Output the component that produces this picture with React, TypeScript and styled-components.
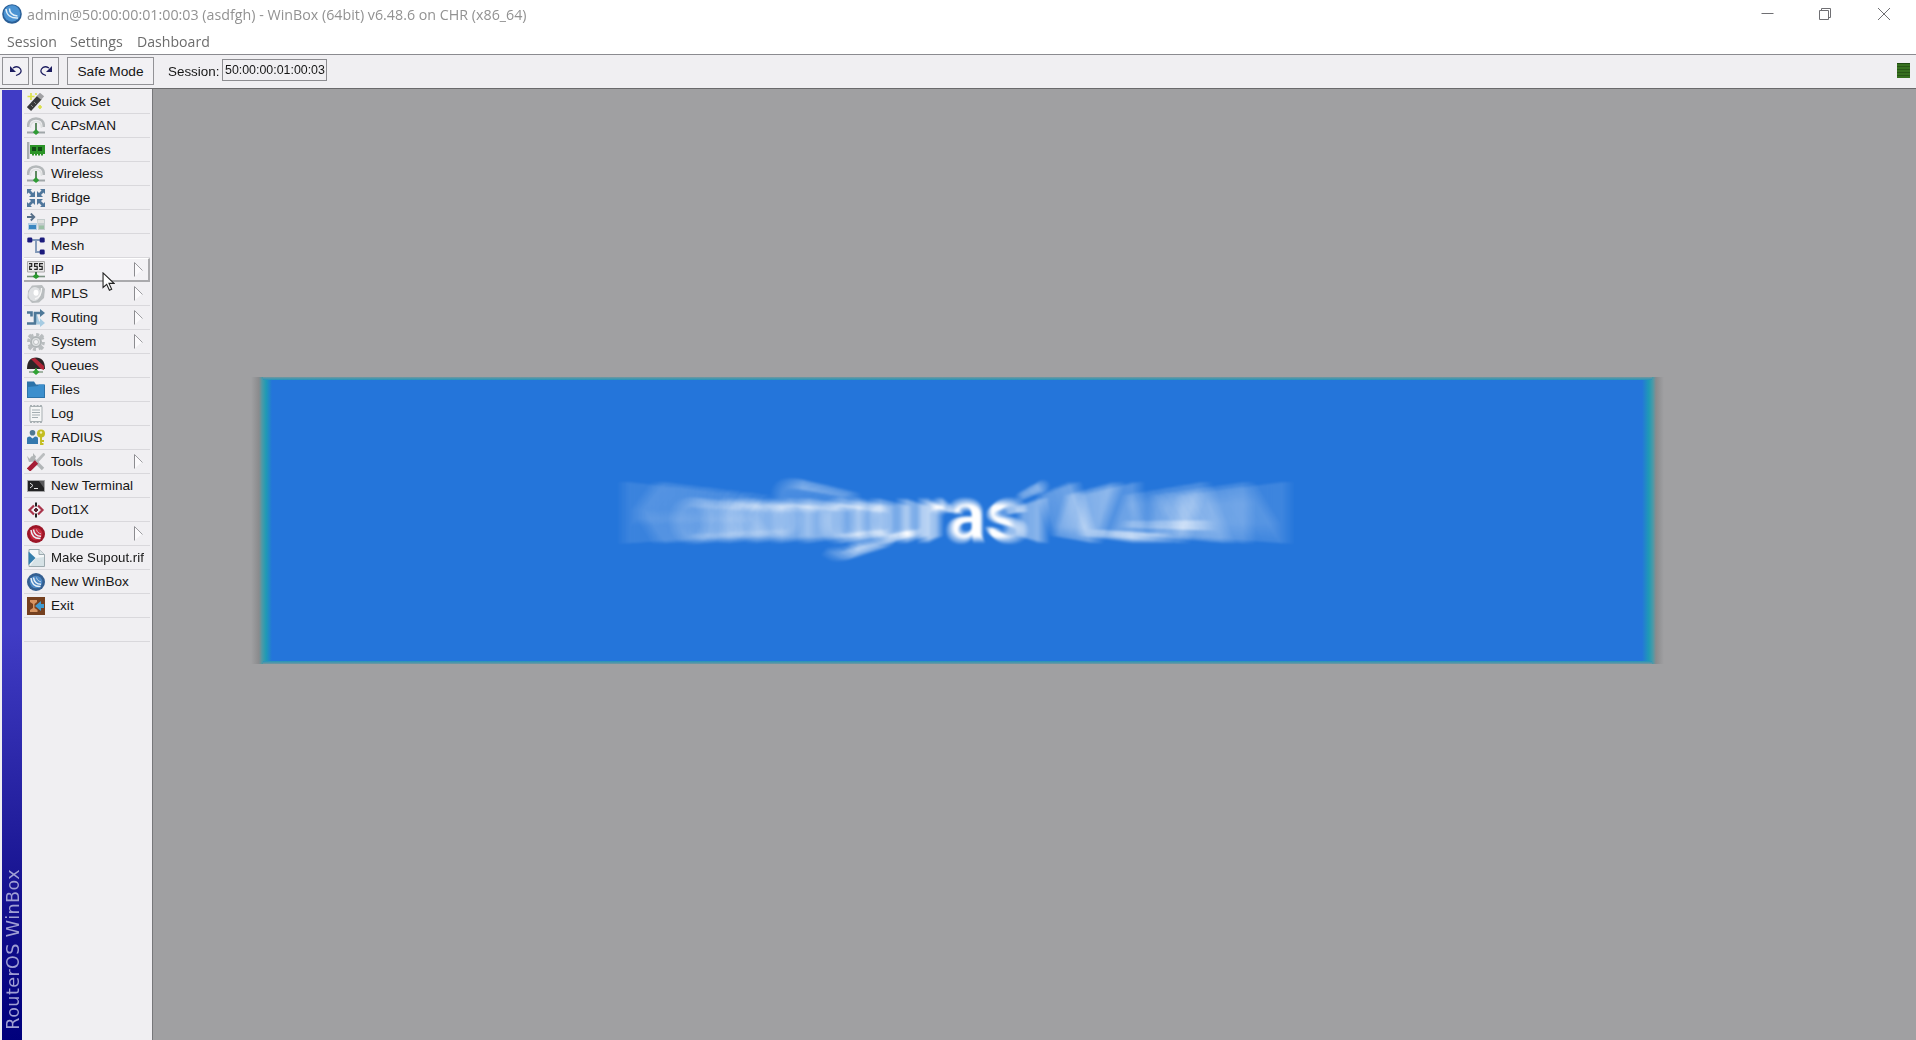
import React from "react";
import styled, { createGlobalStyle, css } from "styled-components";

const Global = createGlobalStyle`
  * { box-sizing: border-box; }
  body { margin: 0; overflow: hidden; background: #f0eff2; }
`;

const Window = styled.div`
  display: flex;
  flex-direction: column;
  position: relative;
  width: 1916px;
  height: 1040px;
  background: #f0eff2;
  color: #161616;
  font-family: "Liberation Sans", Arial, sans-serif;
`;

const TitleBar = styled.header`
  display: flex;
  align-items: center;
  height: 28px;
  padding-left: 2px;
  background: #fff;
`;

const Logo = styled.svg`
  width: 20px;
  height: 20px;
  margin-right: 5px;
  flex: none;
`;

const Title = styled.h1`
  flex: 1;
  margin: 0;
  color: #929292;
  font: 400 15px/28px "Open Sans", "Noto Sans", sans-serif;
  white-space: nowrap;
`;

const Fit = styled.span<{ $x: number }>`
  display: inline-block;
  transform: scaleX(${(p) => p.$x});
  transform-origin: left center;
`;

const Controls = styled.div`
  display: flex;
  gap: 46px;
  padding-right: 26px;
  svg { display: block; width: 12px; height: 12px; fill: none; stroke: #6f6f73; overflow: visible; }
`;

const MenuBar = styled.nav`
  display: flex;
  height: 26px;
  padding-left: 7px;
  background: #fff;
`;

const MenuItem = styled.span<{ $w: number }>`
  width: ${(p) => p.$w}px;
  color: #6c6c6c;
  font: 400 15px/27px "Open Sans", "Noto Sans", sans-serif;
  white-space: nowrap;
`;

const Toolbar = styled.div`
  display: flex;
  align-items: flex-start;
  height: 35px;
  padding: 2px 6px 0 2px;
  border-top: 1px solid #8b8b90;
  border-bottom: 1px solid #6a6a6c;
  font-size: 13.7px;
`;

const Button = styled.button<{ $w: number; $ml?: number }>`
  display: flex;
  align-items: center;
  justify-content: center;
  width: ${(p) => p.$w}px;
  height: 28px;
  margin: 0 0 0 ${(p) => p.$ml ?? 0}px;
  padding: 0;
  border: 1px solid #929296;
  background: #f2f1f4;
  color: #161616;
  font: inherit;
  white-space: nowrap;
`;

const SessionLabel = styled.label`
  margin-left: 14px;
  line-height: 29px;
  width: 54px;
  white-space: nowrap;
`;

const SessionField = styled.output`
  width: 105px;
  height: 22px;
  margin-top: 2px;
  padding-left: 2px;
  border: 1px solid #8c8c90;
  line-height: 20px;
  white-space: nowrap;
`;

const Led = styled.i`
  width: 13px;
  height: 15px;
  margin: 6px 0 0 auto;
  border-top: 1px solid #1f4a12;
  background: repeating-linear-gradient(#37701f 0 2px, #285616 2px 3px);
`;

const Body = styled.div`
  display: flex;
  flex: 1;
  min-height: 0;
`;

const Brand = styled.aside`
  display: flex;
  align-items: center;
  flex: none;
  width: 20px;
  margin: 1px 0 0 2px;
  background: linear-gradient(#403cc5 0, #403cc5 57%, #24209f 76%, #120e8c 87%, #00007c 100%);
  color: #a09fd4;
  font: 400 17.6px/18px "DejaVu Sans", Verdana, sans-serif;
  writing-mode: vertical-rl;
`;

const BrandText = styled.span`
  margin-top: auto;
  margin-bottom: 10px;
  margin-left: 2px;
  transform: rotate(180deg);
  letter-spacing: 0.4px;
  white-space: nowrap;
`;

const Sidebar = styled.nav`
  display: flex;
  flex-direction: column;
  width: 130px;
  padding: 1px 1px 0 2px;
`;

const Row = styled.div<{ $active?: boolean }>`
  display: flex;
  align-items: center;
  height: 24px;
  width: 126px;
  padding-left: 3px;
  border-bottom: 1px solid #d9d8dc;
  font-size: 13.6px;
  white-space: nowrap;
  > svg:first-child { width: 18px; height: 18px; margin-right: 6px; flex: none; }
  ${(p) =>
    p.$active &&
    css`
      border: 1px solid #aaaaad;
      border-width: 0 2px 2px 0;
      border-top: 1px solid #fff;
      background: #f3f2f5;
    `}
`;

const Arrow = styled.svg<{ $active?: boolean }>`
  width: 9px;
  height: 15px;
  margin-left: auto;
  margin-right: ${(p) => (p.$active ? 5 : 7)}px;
  fill: #fbfafc;
`;

const Workspace = styled.main`
  flex: 1;
  position: relative;
  border-left: 1px solid #77777a;
  background: #a0a0a2;
`;

const Banner = styled.section`
  position: absolute;
  left: 98px;
  top: 288px;
  width: 1413px;
  height: 287px;
  background: linear-gradient(90deg, rgba(125, 125, 125, 0) 0, #8a8b8d 8px, #4f99a6 11px, #1f9bb4 15px, #2475da 21px, #2475da 1391px, #1f9bb4 1398px, #4f99a6 1402px, #8a8b8d 1405px, rgba(125, 125, 125, 0) 1413px);
  &::before, &::after {
    content: "";
    position: absolute;
    left: 12px;
    right: 12px;
    height: 3px;
    background: linear-gradient(#74989f, #2294ba);
  }
  &::before { top: 0; }
  &::after { bottom: 0; transform: scaleY(-1); }
`;

const Headline = styled.svg`
  position: absolute;
  left: 349px;
  top: 72px;
  width: 720px;
  height: 140px;
  isolation: isolate;
  text { font-family: Roboto, sans-serif; font-weight: 700; fill: #fff; }
  use { mix-blend-mode: plus-lighter; }
`;

const Cursor = styled.svg`
  position: absolute;
  left: 102px;
  top: 272px;
  width: 13px;
  height: 20px;
`;

const Globe = ({ a, b }: { a: string; b: string }) => (
  <>
    <circle cx="9" cy="9" r="9" fill={a} />
    <circle cx="9" cy="9" r="6.300" fill={b} />
    <path d="M4 5C4.500 10.500 8 13.800 13.500 13.500M6.500 4.500C7 8.500 9.500 11.200 14 11.200" fill="none" stroke="#eaf1f8" strokeWidth="1.500" />
    <path d="M9.500 4.500C10 7 11.500 8.300 14 8.800" fill="none" stroke="#eaf1f8" strokeWidth=".7" />
  </>
);

const Antenna = () => (
  <>
    <path d="M1.200 10C.8 4.500 4 1.500 9 1.500s8.200 3 7.800 8.500" fill="none" stroke="#b4b8ba" strokeWidth="2.600" />
    <path d="M3.500 11C3 7 5.500 4.500 9 4.500s5.500 2.500 5.500 6.500" fill="none" stroke="#dfe1e1" strokeWidth="1.500" />
    <path d="M9 6v8" stroke="#4d7d51" strokeWidth="1.800" />
    <path d="M0 15.500h18" stroke="#a0a6a9" strokeWidth="2" />
    <path d="M9 12l3.200 3.300L9 18l-3.200-2.700z" fill="#2f9c35" />
  </>
);

const icons: Record<string, React.ReactNode> = {
  "Quick Set": (
    <>
      <path d="M2 16L12.500 4.500" stroke="#38383a" strokeWidth="5.600" />
      <path d="M12 5l3-3.500" stroke="#a0a0a3" strokeWidth="5.600" />
      <path d="M4 12l2 2M7 9l2 2" stroke="#858588" strokeWidth="1" />
      <path d="M4 0v7M.5 3.500h7M13 12v4M11 14h4M8 1h2" stroke="#dbe04a" strokeWidth="1.700" />
    </>
  ),
  CAPsMAN: <Antenna />,
  Interfaces: (
    <>
      <path d="M1.200 1v17" stroke="#a8adb0" strokeWidth="2.400" />
      <path d="M3 4h15v9H3z" fill="#2c9428" />
      <path d="M5 6h4v4H5zM11 6h4v4h-4z" fill="#124b16" />
      <path d="M5 13.500h12" stroke="#2c9428" strokeWidth="2" strokeDasharray="2 1" />
    </>
  ),
  Wireless: <Antenna />,
  Bridge: (
    <g fill="#50779c" stroke="#50779c" strokeWidth="2.800">
      <path d="M1 1l5 5M17 1l-5 5M1 17l5-5M17 17l-5-5" />
      <path stroke="none" d="M8 2v6H2l2-2 2-2zM10 2v6h6l-2-2-2-2zM8 16v-6H2l2 2 2 2zM10 16v-6h6l-2 2-2 2zM0 0h5L0 5zM18 0h-5l5 5zM0 18h5l-5-5zM18 18h-5l5-5z" />
    </g>
  ),
  PPP: (
    <>
      <path d="M0 4h7M3.800 .5l3.500 3.500-3.500 3.500" fill="none" stroke="#566f89" strokeWidth="1.800" />
      <path d="M10 6h8v11h-7z" fill="#c3cccc" />
      <path d="M11 7h6v3h-6z" fill="#dfe1df" />
      <path d="M1 10h9v7H1z" fill="#b3cee3" />
      <path d="M2 12h7v4H2z" fill="#3a86c0" />
      <path d="M12 12.500h5v3.500h-5z" fill="#9bc0a5" />
    </>
  ),
  Mesh: (
    <>
      <path d="M3 3h12M9 3v12h6" fill="none" stroke="#8198b8" strokeWidth="1.900" />
      <g fill="#1b1b7c">
        <rect x=".3" y=".5" width="5" height="5" rx="1.300" />
        <rect x="12.700" y=".5" width="5" height="5" rx="1.300" />
        <rect x="12.700" y="12.500" width="5" height="5" rx="1.300" />
      </g>
    </>
  ),
  IP: (
    <>
      <path d="M.5 .5h17v10.500H.5z" fill="#e6e6e6" stroke="#aaa" />
      <path d="M2 2.600h2.700v2.800H2.700v3H5M11 2.600H7.600v2.700h2.600v3H7.200M16 2.600h-3.400v2.700h2.600v3h-3" fill="none" stroke="#252525" strokeWidth="1.200" />
      <path d="M9 11v3" stroke="#42744a" strokeWidth="2" />
      <path d="M0 15.500h18" stroke="#7b9181" strokeWidth="1.600" />
      <path d="M9 12.500l3.500 3L9 18l-3.500-2.500z" fill="#29992f" />
    </>
  ),
  MPLS: (
    <>
      <path d="M5 .5l10-.5 3 4-1 9-5 4.500-7 .5-4.500-5L1 6z" fill="#b9bdbf" />
      <ellipse cx="7.500" cy="9" rx="6" ry="7" fill="#dfe1e3" transform="rotate(15 7.500 9)" />
      <ellipse cx="9" cy="7.800" rx="2.500" ry="3" fill="#fff" />
      <path d="M8 14c4-1 6.500-5 6.500-11" fill="none" stroke="#f6f6f6" strokeWidth="1.400" />
    </>
  ),
  Routing: (
    <>
      <path d="M8 4l3 10h3" fill="none" stroke="#a6cbe2" strokeWidth="3" />
      <path d="M13 9.500l5 4.500-5 4z" fill="#a6cbe2" />
      <path d="M0 3.500h4.500v4M0 14.500h8V4h6" fill="none" stroke="#4e7898" strokeWidth="2.600" />
      <path d="M13 0l5 4-5 4z" fill="#4e7898" />
    </>
  ),
  System: (
    <>
      <circle cx="9" cy="9" r="7.400" fill="none" stroke="#b9bdbf" strokeWidth="3" strokeDasharray="3 2.800" />
      <path d="M2 2l3 3M16 2l-3 3M2 16l3-3M16 16l-3-3" stroke="#b9bdbf" strokeWidth="3.400" />
      <circle cx="9" cy="9" r="5" fill="#e0e3e4" stroke="#b0b5b7" strokeWidth="2" />
      <circle cx="9" cy="9" r="2.500" fill="#f4f4f6" stroke="#bcc0c2" />
    </>
  ),
  Queues: (
    <>
      <path d="M0 12C0 4 3.500.5 9 .5S18 4 18 12z" fill="#2c2627" />
      <path d="M4 2l4-1 9 8v4l-3-1z" fill="#b02537" />
      <path d="M9 11v4" stroke="#34813a" strokeWidth="2" />
      <path d="M2 15h14" stroke="#8ca38e" strokeWidth="1.600" />
      <path d="M9 12l3.500 3L9 18l-3.500-3z" fill="#30a334" />
    </>
  ),
  Files: (
    <>
      <path d="M0 .5h7l2 3h9V17H0z" fill="#2d73a9" />
      <path d="M1 6l10-1 1-1.500h5V16H1z" fill="#3c8fcd" />
    </>
  ),
  Log: (
    <>
      <path d="M3 1.500h12v15H3z" fill="#f5f6f6" stroke="#a7afb2" />
      <path d="M3 1h12M3 17h12" stroke="#a7afb2" strokeWidth="2" strokeDasharray="2 1.300" />
      <path d="M5 5h8M5 7.500h8M5 10h8M5 12.500h6" stroke="#a3adb1" strokeWidth="1" />
    </>
  ),
  RADIUS: (
    <>
      <circle cx="5.500" cy="3.800" r="2.800" fill="#507892" />
      <path d="M0 15V9.500Q0 7.500 3 7.500l2.500 2L8 7.500q3 0 3 2V15z" fill="#3478ae" />
      <circle cx="14" cy="4.500" r="4" fill="#c3bd22" />
      <circle cx="14" cy="3.500" r="1.200" fill="#f3efb7" />
      <path d="M14 7v9M14 12h3M14 15h2.500" stroke="#c3bd22" strokeWidth="1.900" />
    </>
  ),
  Tools: (
    <>
      <path d="M4 4l12 12" stroke="#b1b5b7" strokeWidth="3.400" />
      <path d="M0 3l3 3 3-2V0l3 3.500-2 5-5 .5z" fill="#b1b5b7" />
      <path d="M17.500 .5L9 9.500" stroke="#bbbec0" strokeWidth="2.800" />
      <path d="M9.500 9L1.500 17" stroke="#a51c35" strokeWidth="4.600" />
    </>
  ),
  "New Terminal": (
    <>
      <path d="M.5 3.500h17v11H.5z" fill="#222224" stroke="#a3a3a5" />
      <path d="M3 6l3 2.500L3 11M7 11.500h4" fill="none" stroke="#e5e5e5" />
      <path d="M17 4v7l-5-7z" fill="#58585a" />
    </>
  ),
  Dot1X: (
    <>
      <path d="M7 4.500L2.500 9 7 13.500M11 4.500L15.500 9 11 13.500" fill="none" stroke="#a9354b" strokeWidth="2.200" />
      <path d="M9 1.500v4M9 12.500v4" stroke="#202020" strokeWidth="2" />
      <path d="M7 9h4M9 7v4" stroke="#5a2631" strokeWidth="2" />
    </>
  ),
  Dude: <Globe a="#9c1527" b="#c42b3e" />,
  "Make Supout.rif": (
    <>
      <path d="M2 .5h10l5.500 5v12H2z" fill="#f4f7f8" stroke="#9ba9ae" />
      <path d="M12 .5v5h5.500" fill="#dbe4e7" stroke="#9ba9ae" />
      <path d="M9 9l8-1v9H3z" fill="#d6e2e6" />
      <path d="M1.500 2.500l7 6.500-7 7z" fill="#347fac" />
    </>
  ),
  "New WinBox": <Globe a="#345f91" b="#4b87c4" />,
  Exit: (
    <>
      <path d="M0 0h18v18H0z" fill="#75401f" />
      <path d="M3 3h7v2L7.500 7v4l3 2v2H3v-2l3-2V7L3 5z" fill="#d69461" />
      <path d="M8 9l6-5v3h3v4h-3v3z" fill="#3f9ad0" />
    </>
  ),
};

const submenus = new Set(["IP", "MPLS", "Routing", "System", "Tools", "Dude"]);

// Exposure samples of the title zooming in around its middle letter.
const SAMPLES = 32;
const FROM = 0.66;
const samples = Array.from({ length: SAMPLES }, (_, i) => FROM + ((1 - FROM) * i) / (SAMPLES - 1));
const CX = 373;
const CY = 73;

export default function App() {
  return (
    <Window>
      <Global />
      <TitleBar>
        <Logo viewBox="0 0 20 20">
          <circle cx="10" cy="10" r="9.800" fill="#2a5f97" />
          <circle cx="10" cy="9.500" r="8.300" fill="#4b93d2" />
          <path d="M4 5C4.500 11 9 14.500 16 14M7.500 4.500C7.500 8.500 10.500 11.500 15.500 12" fill="none" stroke="#e0eff9" strokeWidth="1.500" />
        </Logo>
        <Title><Fit $x={0.951}>admin@50:00:00:01:00:03 (asdfgh) - WinBox (64bit) v6.48.6 on CHR (x86_64)</Fit></Title>
        <Controls>
          <svg viewBox="0 0 12 12"><path d="M-.5 5.500h12" /></svg>
          <svg viewBox="0 0 12 12"><path d="M-.5 2.500h9v9h-9zM1.500 2.500v-2h9v9h-2" /></svg>
          <svg viewBox="0 0 12 12"><path d="M0 0l12 12M12 0L0 12" /></svg>
        </Controls>
      </TitleBar>
      <MenuBar>
        <MenuItem $w={63}><Fit $x={0.94}>Session</Fit></MenuItem>
        <MenuItem $w={67}><Fit $x={0.95}>Settings</Fit></MenuItem>
        <MenuItem $w={80}><Fit $x={0.94}>Dashboard</Fit></MenuItem>
      </MenuBar>
      <Toolbar>
        <Button $w={27}>
          <svg width="14" height="14" viewBox="0 0 14 14">
            <path d="M4 4Q9 1 11.500 5T7 11.500" fill="none" stroke="#1d1d60" strokeWidth="1.300" />
            <path d="M1 2v6h6z" fill="#1d1d60" />
          </svg>
        </Button>
        <Button $w={27} $ml={3}>
          <svg width="14" height="14" viewBox="0 0 14 14">
            <path d="M10 4Q5 1 2.500 5T7 11.500" fill="none" stroke="#1d1d60" strokeWidth="1.300" />
            <path d="M13 2v6H7z" fill="#1d1d60" />
          </svg>
        </Button>
        <Button $w={87} $ml={8}>Safe Mode</Button>
        <SessionLabel><Fit $x={0.98}>Session:</Fit></SessionLabel>
        <SessionField><Fit $x={0.905}>50:00:00:01:00:03</Fit></SessionField>
        <Led />
      </Toolbar>
      <Body>
        <Brand><BrandText>RouterOS WinBox</BrandText></Brand>
        <Sidebar>
          {Object.keys(icons).map((name) => (
            <Row key={name} $active={name === "IP"}>
              <svg viewBox="0 0 18 18">{icons[name]}</svg>
              <Fit $x={name === "Make Supout.rif" ? 0.975 : 1}>{name}</Fit>
              {submenus.has(name) && (
                <Arrow viewBox="0 0 9 15" $active={name === "IP"}>
                  <path d="M.5 1v13.500L8 8z" />
                  <path d="M.5 14.500V.5" fill="none" stroke="#8c8c90" />
                  <path d="M.5 .5l8 8" fill="none" stroke="#9d9da1" />
                </Arrow>
              )}
            </Row>
          ))}
          <Row />
        </Sidebar>
        <Workspace>
          <Banner>
            <Headline viewBox="0 0 720 140">
              <defs>
                <g id="headline" fontSize="87">
                  <text x="13" y="94.500" textLength="442" lengthAdjust="spacingAndGlyphs">Konfigurasi</text>
                  <text x="467" y="94.500" textLength="232" lengthAdjust="spacingAndGlyphs">VLAN</text>
                </g>
                <filter id="soft"><feGaussianBlur stdDeviation="1.200" /></filter>
              </defs>
              <g filter="url(#soft)">
                {samples.map((s) => (
                  <use
                    key={s}
                    href="#headline"
                    opacity={1 / SAMPLES}
                    transform={`translate(${CX} ${CY}) scale(${s}) translate(${-CX} ${-CY})`}
                  />
                ))}
              </g>
            </Headline>
          </Banner>
        </Workspace>
      </Body>
      <Cursor viewBox="0 0 14 22">
        <path d="M1 1v16l4-3.500 3 6.500 2.500-1-3-6.500H13z" fill="#fff" stroke="#222" strokeWidth="1.200" />
      </Cursor>
    </Window>
  );
}
